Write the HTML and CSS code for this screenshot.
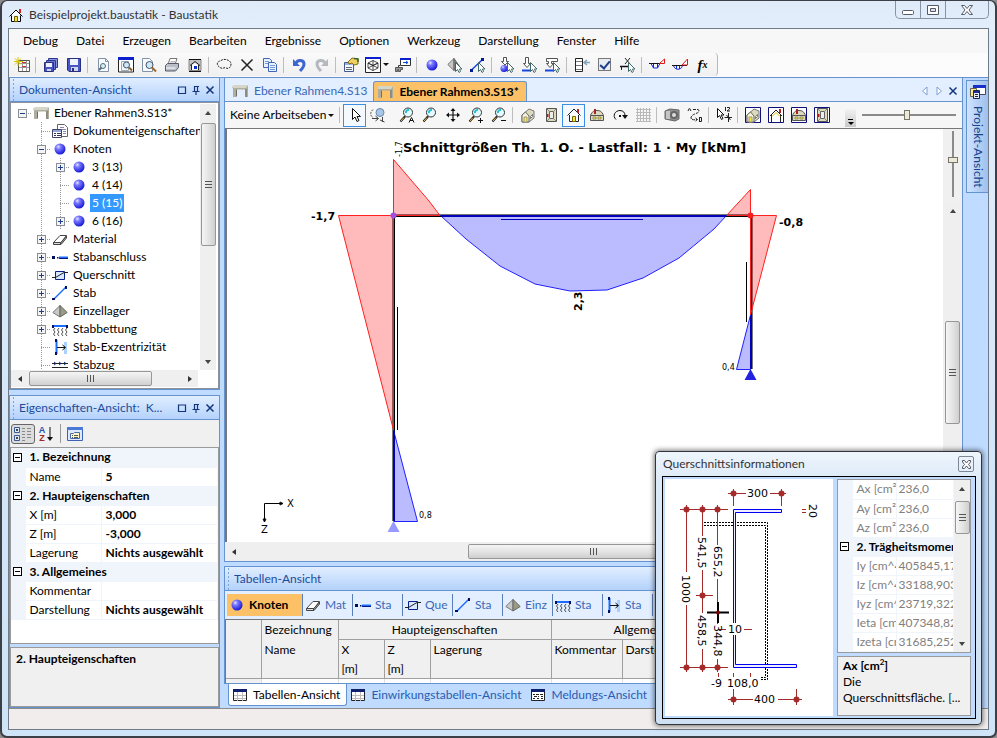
FILE: index.html
```html
<!DOCTYPE html>
<html lang="de">
  <head>
    <meta charset="UTF-8" />
    <meta name="viewport" content="width=device-width, initial-scale=1.0" />
    <title>Beispielprojekt.baustatik - Baustatik</title>
    <link rel="stylesheet" href="styles.css">
  </head>
  <body>
    <!-- Symbole -->
    <svg class="sprite" width="0" height="0" aria-hidden="true">
      <defs>
        <radialGradient id="g-ball" cx="35%" cy="30%" r="70%">
          <stop offset="0" stop-color="#e8e8ff" /><stop offset=".3" stop-color="#7b7bff" /><stop offset="1" stop-color="#1a1ad8" />
        </radialGradient>
        <linearGradient id="g-sup" x1="0" x2="1"><stop offset="0" stop-color="#9a9aff" /><stop offset="1" stop-color="#2020e0" /></linearGradient>
        <g id="cursor-s"><path d="M8.5 5.5v9l2-2 1.500 3 1.500-1-1-2.500h2.500z" fill="#fff" stroke="#3f6a6a" /></g>
        <g id="lens">
          <path d="M1.500 14.500 6 9.500" stroke="#111" stroke-width="2" /><path d="M2 14 5 10.500" stroke="#e9c34a" />
          <circle cx="9" cy="5.500" r="4.500" fill="#e6fbff" stroke="#333" /><path d="M7 6a2.500 2.500 0 0 1 3-3" fill="none" stroke="#18c0d8" stroke-width="2" />
        </g>
        <g id="hut"><path d="M1.500 8.500 8 2l6.500 6.500M3.500 8v6.500h9V8" fill="none" stroke="#222" /><path d="M4 8 8 4l4 4v6H4z" fill="#fff" /><path d="M6.500 9.500h3v5h-3z" fill="#ffe93c" stroke="#776a00" /><path d="M11 2h2v4h-2z" fill="#b22" /></g>
        <g id="hut3d"><path d="M2 8 9 2l5 2v7l-5 4H2z" fill="#ddd9bc" stroke="#777" /><path d="M2 8l3.500-3L9 9v6H2z" fill="#f5f2d6" stroke="#666" /><path d="M4 10h3v5H4z" fill="#ffe93c" stroke="#998" /><path d="M10.500 9.500l2-2v2l-2 2z" fill="#fff" stroke="#777" /></g>
        <g id="hutside"><path d="M1.500 8.500C3 4.500 5 3.500 8 3.500s5 1 6.500 5v5h-13z" fill="#ddd9bc" stroke="#555" /><path d="M1.500 8.500h13" stroke="#555" /><path d="M5 2h2v5H5z" fill="#a22" /><path d="M4 10h3v2H4zM9 10h3v2H9z" fill="#ffe93c" stroke="#665" stroke-width=".6" /></g>
        <g id="tuer"><path d="M3.500 1.500h10v13h-10z" fill="#ddd9bc" stroke="#555" /><path d="M6.500 4.500h4v7h-4z" fill="#eee" stroke="#666" /><path d="M3.500 1.500l3 3M13.500 1.500l-3 3M3.500 14.500l3-3M13.500 14.500l-3-3" stroke="#888" /><path d="M4 7h1.500v3H4z" fill="#b11" /></g>
      </defs>
      <symbol id="i-app" viewBox="0 0 16 16"><path d="M1.500 9.500 8 3l6.500 6.500M3.500 8.500v6h9v-6" fill="#fff" stroke="#000" /><path d="M11 2h2v4h-2z" fill="#e02020" /><path d="M6.500 9.500h3v5h-3z" fill="#f8e33a" stroke="#6a5a00" /></symbol>
      <symbol id="i-new" viewBox="0 0 16 16"><path d="M4.500 3.500h11v11h-11z" fill="#fff" stroke="#555" /><path d="M5 6.500h10M5 10.500h10M8.500 4v10M12.500 4v10" stroke="#999" /><path d="M8 5.500h4M8 9.500h4" stroke="#c33" /><path d="M4 0v9M0 4.500h9M1 1.500l6 6M7 1.500l-6 6" stroke="#d9c400" /></symbol>
      <symbol id="i-save" viewBox="0 0 16 16"><path d="M1.500 1.500h13v13H3l-1.500-1.500z" fill="#4a55c4" stroke="#26307e" /><path d="M4 2h8v6H4z" fill="#eef2ff" /><path d="M5 10h7v4H5z" fill="#cfd5ea" /><path d="M6 11h2v3H6z" fill="#26307e" /></symbol>
      <symbol id="i-saveall" viewBox="0 0 16 16"><path d="M5.500 1.500h9v9h-9z" fill="#8d96dc" stroke="#2c3690" /><path d="M3.500 3.500h9v9h-9z" fill="#6d78d0" stroke="#2c3690" /><path d="M1.500 5.500h9v9h-9z" fill="#4a55c4" stroke="#26307e" /><path d="M3 6h6v4H3z" fill="#eef2ff" /><path d="M4 12h4v2H4z" fill="#cfd5ea" /></symbol>
      <symbol id="i-page" viewBox="0 0 16 16"><path d="M3.500 1.500h7l3 3v10h-10z" fill="#f6f9fd" stroke="#8494a8" /><path d="M10.500 1.500v3h3" fill="none" stroke="#8494a8" /><circle cx="8" cy="9" r="2.500" fill="#d8ecf4" stroke="#55707c" /><path d="M4 13l2.500-2.500" stroke="#55707c" stroke-width="2" /></symbol>
      <symbol id="i-preview" viewBox="0 0 16 16"><path d="M.5 1h15v14H.5z" fill="#fff" stroke="#222" /><path d="M0 0h16v3H0z" fill="#0a1fd0" /><path d="M3.500 4.500h7v9h-7z" fill="#f3f6fa" stroke="#9ab" /><circle cx="8.500" cy="8" r="3" fill="#cfe8f8" stroke="#456" /><path d="M11 10.500l3 3" stroke="#8a5a20" stroke-width="2" /></symbol>
      <symbol id="i-pagemag" viewBox="0 0 16 16"><path d="M1.500 1.500h7l3 3v10h-10z" fill="#f6f9fd" stroke="#8494a8" /><circle cx="8.500" cy="8" r="3.500" fill="#cfe8f8" stroke="#456" /><path d="M11 10.500l4 4" stroke="#a5682a" stroke-width="2" /></symbol>
      <symbol id="i-print" viewBox="0 0 16 16"><path d="M6 1.500h7l-2 6H4z" fill="#fff" stroke="#777" /><path d="M6.500 4.500h5M6 6h5" stroke="#bbb" /><path d="M1.500 8.500l2-2h11v4l-3 3.500h-10z" fill="#b9bec8" stroke="#555c68" /><path d="M2 11h9.500" stroke="#fff" /></symbol>
      <symbol id="i-hutgray" viewBox="0 0 16 16"><path d="M2 2.500h12v11H2z" fill="#c4c4c4" stroke="#888" /><path d="M2 2.500h12M2 14.500h12" stroke="#111" /><path d="M3 8.500l5-4 5 4M4.500 8v5M11.500 8v5" fill="none" stroke="#222" /><path d="M5 8l3-2 3 2v5H5z" fill="#fff" /><path d="M7 9h3v3H7z" fill="#13c" /></symbol>
      <symbol id="i-lasso" viewBox="0 0 16 16"><path d="M5 3.500C8 1 15 3 15 7s-3 5-5 4-3 1-5 0S.5 8 1.500 6 3 4.500 5 3.500z" fill="none" stroke="#222" stroke-dasharray="2 1" /></symbol>
      <symbol id="i-x" viewBox="0 0 16 16"><path d="M2.500 2.500l11 11M13.500 2.500l-11 11" stroke="#222" stroke-width="1.500" /></symbol>
      <symbol id="i-copy" viewBox="0 0 16 16"><path d="M1.500 1.500h6l2 2v7h-8z" fill="#e8f1ff" stroke="#3f66b8" /><path d="M6.500 5.500h6l2 2v7h-8z" fill="#e8f1ff" stroke="#3f66b8" /><path d="M3 4.500h4M3 6.500h3M8 8.500h5M8 10.500h5M8 12.500h5" stroke="#7a9ad8" /></symbol>
      <symbol id="i-undo" viewBox="0 0 16 16"><path d="M5 6c2-4 8-3 8 1 0 3-2 5-4 7" fill="none" stroke="#3d66d0" stroke-width="3" /><path d="M2 2v7h7z" fill="#3d66d0" /></symbol>
      <symbol id="i-redo" viewBox="0 0 16 16"><path d="M11 6C9 2 3 3 3 7c0 3 2 5 4 7" fill="none" stroke="#b5b9bf" stroke-width="3" /><path d="M14 2v7H7z" fill="#b5b9bf" /></symbol>
      <symbol id="i-props" viewBox="0 0 16 16"><path d="M1.500 5.500h9v9h-9z" fill="#f2f6ff" stroke="#44598c" /><path d="M2 6h8v2H2z" fill="#9db3df" /><path d="M3 10.500h6M3 12.500h6" stroke="#667" /><path d="M5 5l4-4 6 1v5l-4 1-2-2-3 1z" fill="#f1cf63" stroke="#8a6d1a" /><path d="M11 1.500l4 .5v3" stroke="#386a2c" fill="none" stroke-width="1.500" /></symbol>
      <symbol id="i-cube" viewBox="0 0 16 16"><path d="M.5 1h15v14.500H.5z" fill="#fff" stroke="#222" /><path d="M0 0h16v2H0z" fill="#0a1fd0" /><path d="M8 3.500l5 2.500v5l-5 2.500-5-2.500V6zM8 3.500v10M3 6l10 5M13 6 3 11M3 6l5 2.500L13 6" fill="none" stroke="#222" stroke-width=".8" /></symbol>
      <symbol id="i-link" viewBox="0 0 16 16"><path d="M5.500 1.500h10v7h-10z" fill="#fff" stroke="#333" /><path d="M5 1h11v2H5z" fill="#0a1fd0" /><path d="M8 5.500h5M11 4l2 1.500L11 7" fill="none" stroke="#0a50d0" /><path d="M5 8.500H3.500v2" fill="none" stroke="#333" /><path d="M.5 10.500h7v2h-2v2h-2v-2h-1v2h-2z" fill="#999" stroke="#555" /></symbol>
      <symbol id="i-ball" viewBox="0 0 16 16"><circle cx="8" cy="8" r="5.500" fill="url(#g-ball)" /></symbol>
      <symbol id="i-lager" viewBox="0 0 16 16"><path d="M8 2.500v11.500L.8 9.500z" fill="#c8c8c8" stroke="#777" /><path d="M8 2.500v11.500l7.200-4.500z" fill="#9b9b84" stroke="#666" /></symbol>
      <symbol id="i-lagercur" viewBox="0 0 16 16"><path d="M7 1.500v12L.8 7.500z" fill="#c8c8c8" stroke="#777" /><path d="M7 1.500v12l5-5z" fill="#888" stroke="#666" /><use href="#cursor-s" /></symbol>
      <symbol id="i-linecur" viewBox="0 0 16 16"><path d="M1 13.500 12.500 2.500" stroke="#1746e0" stroke-width="1.500" /><path d="M0 12h3v3H0zM11 1h3v3h-3z" fill="#001a90" /><use href="#cursor-s" /></symbol>
      <symbol id="i-ballcur" viewBox="0 0 16 16"><circle cx="5" cy="11.500" r="3.500" fill="url(#g-ball)" /><path d="M4.500.5h3v4h2L6 8 2.500 4.500h2z" fill="#fff" stroke="#555" /><use href="#cursor-s" /></symbol>
      <symbol id="i-loadcur" viewBox="0 0 16 16"><path d="M0 13.500h9" stroke="#1746e0" stroke-width="2" /><path d="M3.500.5h3v6h2L5 10.500 1.500 6.500h2z" fill="#fff" stroke="#555" /><use href="#cursor-s" /></symbol>
      <symbol id="i-load2cur" viewBox="0 0 16 16"><path d="M0 13.500h9" stroke="#1746e0" stroke-width="2" /><path d="M1.500 1.500h11v3h-6v2h2L5 10.500 1.500 6.500h2v-2h-2z" fill="#fff" stroke="#555" /><use href="#cursor-s" /></symbol>
      <symbol id="i-bars" viewBox="0 0 16 16"><path d="M1.500 1.500h7v13h-7z" fill="#fff" stroke="#222" /><path d="M2 4.500h6M2 8.500h6M2 12.500h6" stroke="#777" /><path d="M16 5.500h-5M13 3l-3 2.500L13 8" fill="none" stroke="#7ea2b8" stroke-width="1.500" /></symbol>
      <symbol id="i-cut" viewBox="0 0 16 16"><path d="M0 9.500h9" stroke="#111" stroke-width="1.500" /><path d="M5 1l5 6M10 1 5 7M1.500 9v4" stroke="#222" /><use href="#cursor-s" /></symbol>
      <symbol id="i-mom1" viewBox="0 0 16 16"><path d="M0 6.500h11" stroke="#111" /><path d="M2 6.500 4.500 11h4L11 6.500M4.500 7v4M8.500 7v4" fill="none" stroke="#1626d8" /><path d="M10.500 6.500 15.500 2v4.500z" fill="#fff" stroke="#e01818" /></symbol>
      <symbol id="i-mom2" viewBox="0 0 16 16"><path d="M0 8.500h15" stroke="#111" /><path d="M1.500 8.500c1 5 8 5 9 0M4.500 9v3M7.500 9v3" fill="none" stroke="#1626d8" /><path d="M10 8l5.500-6v6z" fill="#fff" stroke="#e01818" /></symbol>
      <symbol id="i-cursor" viewBox="0 0 16 16"><path d="M5.500 1.500v11l2.500-2.500 2 4.500 2-1-2-4h3.500z" fill="#fff" stroke="#111" /></symbol>
      <symbol id="i-orbit" viewBox="0 0 16 16"><circle cx="10" cy="5.500" r="4" fill="#a9c8e8" stroke="#6687aa" /><path d="M3 2.500C0 5 0 9 3 10.500" fill="none" stroke="#555" stroke-dasharray="2 1" /><path d="M2 11.500h6M5.500 9l3 2.500-3 2.500M12.500 10v5M10 13l4.500 2" fill="none" stroke="#444" /></symbol>
      <symbol id="i-maga" viewBox="0 0 16 16"><use href="#lens" /><path d="M10 15.500l2.500-5 2.500 5M11 13.500h3" fill="none" stroke="#111" /></symbol>
      <symbol id="i-mag" viewBox="0 0 16 16"><use href="#lens" /></symbol>
      <symbol id="i-magp" viewBox="0 0 16 16"><use href="#lens" /><path d="M10 13.500h5M12.500 11v5" stroke="#111" /></symbol>
      <symbol id="i-magm" viewBox="0 0 16 16"><use href="#lens" /><path d="M10 13.500h5" stroke="#111" /></symbol>
      <symbol id="i-move" viewBox="0 0 16 16"><path d="M8 2v12M2 8h12" stroke="#111" stroke-width="1.200" /><path d="M8 1l2.500 3h-5zM8 15l2.500-3h-5zM1 8l3-2.500v5zM15 8l-3-2.500v5z" fill="#111" /></symbol>
      <symbol id="i-hut3d" viewBox="0 0 16 16"><use href="#hut3d" /></symbol>
      <symbol id="i-tuer" viewBox="0 0 16 16"><use href="#tuer" /></symbol>
      <symbol id="i-hut" viewBox="0 0 16 16"><use href="#hut" /></symbol>
      <symbol id="i-hutside" viewBox="0 0 16 16"><use href="#hutside" /></symbol>
      <symbol id="i-hut3d-f" viewBox="0 0 16 16"><path d="M.5.5h15v15H.5z" fill="#fff" stroke="#10107c" /><use href="#hut3d" /></symbol>
      <symbol id="i-hut-f" viewBox="0 0 16 16"><path d="M.5.5h15v15H.5z" fill="#fff" stroke="#10107c" /><path d="M2 9l6-6 6 6M3.500 8v7M12.500 8v7" fill="none" stroke="#222" /><path d="M4 9.500 8 5.500l4 4" fill="none" stroke="#d9c400" /><path d="M11 2h2v4h-2z" fill="#b22" /></symbol>
      <symbol id="i-hutside-f" viewBox="0 0 16 16"><path d="M.5.5h15v15H.5z" fill="#fff" stroke="#10107c" /><use href="#hutside" /></symbol>
      <symbol id="i-tuer-f" viewBox="0 0 16 16"><path d="M.5.5h15v15H.5z" fill="#fff" stroke="#10107c" /><use href="#tuer" /></symbol>
      <symbol id="i-rot" viewBox="0 0 16 16"><path d="M4 12.500C0 9 3 3.500 8 3.500c3 0 5 2 5 5" fill="none" stroke="#111" /><path d="M10 8h6l-3 4z" fill="#111" /><path d="M7 8h2v2H7z" fill="#111" /></symbol>
      <symbol id="i-grid" viewBox="0 0 16 16"><path d="M2.500 1v14M5.500 1v14M8.500 1v14M11.500 1v14M14.500 1v14M1 2.500h15M1 5.500h15M1 8.500h15M1 11.500h15M1 14.500h15" stroke="#b9b9b9" /></symbol>
      <symbol id="i-cam" viewBox="0 0 16 16"><path d="M1 4l5-2 9 1v9l-4 2-10-2z" fill="#8e8e8e" stroke="#666" /><circle cx="10" cy="8" r="4" fill="#666" /><circle cx="10" cy="8" r="2" fill="#ddd" /><path d="M2 4h4v8H2z" fill="#c4c4c4" /></symbol>
      <symbol id="i-path" viewBox="0 0 16 16"><path d="M1 4l1.500-3L4 4M6 2.500h5c2 1 1 3-2 4S4 9 4 11s3 2 6 1.500" fill="none" stroke="#222" stroke-dasharray="3 1" /><path d="M12.500 10v5M12.500 10.500h2v4h-2M8.500 11l2 1.500-2 1.500" fill="none" stroke="#222" /></symbol>
      <symbol id="i-cur12" viewBox="0 0 16 16"><path d="M1.500 1.500v9l2-2 2 4 1.500-1-2-3.500H8z" fill="#fff" stroke="#111" /><path d="M9.500 0v4M11 .5h2.500v1.500L11 4h3M12.500 6v9M8.500 10.500H16M10.500 8l4 5" fill="none" stroke="#222" /></symbol>
      <symbol id="i-frame" viewBox="0 0 16 16"><path d="M0 4l2-1.500h14V14h-3V6.500H4V14H1V5.500z" fill="#aeae9e" /><path d="M0 4l2-2h14l-2 3H1z" fill="#d6d6c8" /><path d="M4.500 6.500v7M14 6v8" stroke="#6d6d62" /></symbol>
      <symbol id="i-doc" viewBox="0 0 16 16"><path d="M5.500 1.500h7l3 3v9h-10z" fill="#fff" stroke="#666" /><path d="M8 4.500h4M8 6.500h6M11 8.500h3M11 10.500h3" stroke="#88a" /><path d="M.5 6.500h9v8h-9z" fill="#fff" stroke="#446" /><path d="M1 7h8v2H1z" fill="#8fa5d8" /><path d="M2 10.500h2M5 10.500h4M2 12.500h2M5 12.500h4" stroke="#335" /></symbol>
      <symbol id="i-eraser" viewBox="0 0 16 16"><path d="M1.500 11.500 8 4.500h6.500L9 11.500z" fill="#fff" stroke="#444" /><path d="M1.500 11.500v2H8l1-2z" fill="#ddd" stroke="#444" /><path d="M9 11.500l-1 2h1l5.500-6.500v-2z" fill="#aaa" stroke="#444" /></symbol>
      <symbol id="i-anschl" viewBox="0 0 16 16"><path d="M0 7h3v3H0zM5 8h1.500v1.500H5z" fill="#00105c" /><path d="M7 8.500h9" stroke="#1a6cff" stroke-width="2" /><path d="M7 9.500h9" stroke="#06187c" /></symbol>
      <symbol id="i-quer" viewBox="0 0 16 16"><path d="M3.500 4.500h9v8h-9z" fill="#d8e8ff" stroke="#0a2088" /><path d="M0 10.500h3.500L12 5.500h4" stroke="#222" fill="none" /></symbol>
      <symbol id="i-stab" viewBox="0 0 16 16"><path d="M1.500 14.500 14 2" stroke="#1a6cff" stroke-width="1.500" /><path d="M0 13h3v2H0zM13 1h2v3h-2z" fill="#001060" /></symbol>
      <symbol id="i-bett" viewBox="0 0 16 16"><path d="M0 5h16" stroke="#1a6cff" stroke-width="2" /><path d="M0 4h2v3H0zM14 4h2v3h-2z" fill="#001060" /><path d="M3 7l-1.500 2 1.500 2-1.500 2L3 15M7 7 5.500 9 7 11l-1.500 2L7 15M11 7 9.500 9l1.500 2-1.500 2 1.500 2M15 7l-1.500 2 1.500 2-1.500 2 1.500 2" fill="none" stroke="#222" stroke-width=".8" /></symbol>
      <symbol id="i-exz" viewBox="0 0 16 16"><path d="M4.500 1v14" stroke="#1a6cff" stroke-width="2" /><path d="M3 0h2v3H3zM3 13h2v3H3z" fill="#001060" /><path d="M12 3h3v12h-3z" fill="#a9d0ff" /><path d="M5 8.500h8M10.500 6l3 2.500-3 2.500" fill="none" stroke="#111" /></symbol>
      <symbol id="i-zug" viewBox="0 0 16 16"><path d="M0 6.500h16M0 10.500h16" stroke="#222" /><path d="M2 5l2 1.500L2 8M7 5l2 1.500L7 8M12 5l2 1.500L12 8" stroke="#16308c" fill="none" /></symbol>
      <symbol id="i-cat" viewBox="0 0 22 18"><path d="M2.500 2.500h5v5h-5zM2.500 10.500h5v5h-5z" fill="#dbe9ff" stroke="#3a5c96" /><path d="M4 5h2M5 4v2M4 13h2M5 12v2" stroke="#111" /><path d="M10 3.500h3M15 3.500h4M10 6.500h3M15 6.500h4M10 9.500h3M15 9.500h4M10 12.500h3M15 12.500h4M10 15.500h3" stroke="#888" /></symbol>
      <symbol id="i-down" viewBox="0 0 6 16"><path d="M3 1v12" stroke="#111" /><path d="M0 11h6l-3 4z" fill="#111" /></symbol>
      <symbol id="i-pages" viewBox="0 0 16 16"><path d="M.5 1.500h15v13H.5z" fill="#dbe8ff" stroke="#3c62b0" /><path d="M0 1h16v3H0z" fill="#4a78d8" /><path d="M3.500 7.500h3l1-1h5v6h-9z" fill="#fff6c8" stroke="#4a6aa8" /><path d="M5 9.500h1M7 9.500h4M5 11.500h1M7 11.500h4" stroke="#555" /></symbol>
      <symbol id="i-table" viewBox="0 0 16 16"><path d="M1.500 2.500h13v11h-13z" fill="#fff" stroke="#222" /><path d="M1 2h14v3H1z" fill="#10206c" /><path d="M5.500 5v9M10.500 5v9M2 8.500h12M2 11.500h12" stroke="#bbb" /></symbol>
      <symbol id="i-msg" viewBox="0 0 16 16"><path d="M1.500 2.500h13v11h-13z" fill="#fff" stroke="#222" /><path d="M1 2h14v3H1z" fill="#10206c" /><path d="M3 7.500h2M6 7.500h3M10 7.500h3M4 9.500h3M8 9.500h1M11 9.500h2M3 11.500h2M7 11.500h2M11 11.500h2" stroke="#222" /></symbol>
      <symbol id="i-proj" viewBox="0 0 16 16"><path d="M3.500 1.500h12v9h-12z" fill="#fff" stroke="#446" /><path d="M3 1h13v3H3z" fill="#1a2ec8" /><path d="M.5 4.500h6v8h-6z" fill="#ffe98a" stroke="#664" /><path d="M3.500 6.500h6v8h-6z" fill="#e9eeff" stroke="#224" /><path d="M4 7h5v2H4z" fill="#1a2e98" /><path d="M5 10.500h3M5 12.500h3" stroke="#224" /></symbol>
      <symbol id="i-max" viewBox="0 0 10 10"><path d="M1.500 2h7v6.500h-7z" fill="none" stroke="#12357c" stroke-width="1.200" /></symbol>
      <symbol id="i-pin" viewBox="0 0 10 10"><path d="M3 1.500h5M3.500 1v5M6.500 1v5M1.500 6.500h7M5 6v4" fill="none" stroke="#12357c" stroke-width="1.200" /></symbol>
      <symbol id="i-close" viewBox="0 0 10 10"><path d="M1.500 1.500l7 7M8.500 1.500l-7 7" stroke="#12357c" stroke-width="1.500" /></symbol>
      <symbol id="i-prev" viewBox="0 0 10 10"><path d="M7 1v8L2.500 5z" fill="#fff" stroke="#7c9fd4" /></symbol>
      <symbol id="i-next" viewBox="0 0 10 10"><path d="M3 1v8l4.500-4z" fill="#fff" stroke="#7c9fd4" /></symbol>
    </svg>

    <div class="window">
      <!-- Titelleiste -->
      <header class="titlebar">
        <svg class="icon"><use href="#i-app" /></svg>
        <h1>Beispielprojekt.baustatik - Baustatik</h1>
        <div class="caption">
          <button aria-label="Minimieren"><svg width="14" height="12"><rect x="1.500" y="6.500" width="11" height="4" rx="1" fill="#fff" stroke="#555b66" /></svg></button>
          <button aria-label="Maximieren"><svg width="14" height="12"><path d="M1.500 1.500h11v9h-11z" fill="#fff" stroke="#555b66" /><path d="M4.500 4.500h5v3h-5z" fill="#dde" stroke="#555b66" /></svg></button>
          <button class="caption-close" aria-label="Schließen"><svg width="14" height="12"><path d="M1.500 1.500h3l2.500 3 2.500-3h3L9 6l3.500 4.500h-3L7 7.500l-2.500 3h-3L5 6z" fill="#fff" stroke="#555b66" /></svg></button>
        </div>
      </header>

      <div class="client">
        <!-- Menü -->
        <nav class="menubar">
          <button>Debug</button><button>Datei</button><button>Erzeugen</button><button>Bearbeiten</button><button>Ergebnisse</button><button>Optionen</button><button>Werkzeug</button><button>Darstellung</button><button>Fenster</button><button>Hilfe</button>
        </nav>
        <!-- Hauptwerkzeuge -->
        <div class="toolrow">
          <div class="tools tools-main">
            <button aria-label="Neu"><svg class="icon"><use href="#i-new" /></svg></button><i></i>
            <button aria-label="Alle speichern"><svg class="icon"><use href="#i-saveall" /></svg></button>
            <button aria-label="Speichern"><svg class="icon"><use href="#i-save" /></svg></button><i></i>
            <button aria-label="Seite"><svg class="icon"><use href="#i-page" /></svg></button>
            <button aria-label="Vorschau"><svg class="icon"><use href="#i-preview" /></svg></button>
            <button aria-label="Seitenansicht"><svg class="icon"><use href="#i-pagemag" /></svg></button>
            <button aria-label="Drucken"><svg class="icon"><use href="#i-print" /></svg></button>
            <button aria-label="Grafik"><svg class="icon"><use href="#i-hutgray" /></svg></button><i></i>
            <button aria-label="Lasso"><svg class="icon"><use href="#i-lasso" /></svg></button>
            <button aria-label="Löschen"><svg class="icon"><use href="#i-x" /></svg></button>
            <button aria-label="Kopieren"><svg class="icon"><use href="#i-copy" /></svg></button><i></i>
            <button aria-label="Rückgängig"><svg class="icon"><use href="#i-undo" /></svg></button>
            <button aria-label="Wiederholen"><svg class="icon"><use href="#i-redo" /></svg></button><i></i>
            <button aria-label="Eigenschaften"><svg class="icon"><use href="#i-props" /></svg></button>
            <button class="drop" aria-label="3D-Ansicht"><svg class="icon"><use href="#i-cube" /></svg></button>
            <button aria-label="Verknüpfen"><svg class="icon"><use href="#i-link" /></svg></button><i></i>
            <button aria-label="Knoten"><svg class="icon"><use href="#i-ball" /></svg></button>
            <button aria-label="Lager"><svg class="icon"><use href="#i-lagercur" /></svg></button>
            <button aria-label="Stab"><svg class="icon"><use href="#i-linecur" /></svg></button><i></i>
            <button aria-label="Knotenlast"><svg class="icon"><use href="#i-ballcur" /></svg></button>
            <button aria-label="Stablast"><svg class="icon"><use href="#i-loadcur" /></svg></button>
            <button aria-label="Streckenlast"><svg class="icon"><use href="#i-load2cur" /></svg></button><i></i>
            <button aria-label="Lastfälle"><svg class="icon"><use href="#i-bars" /></svg></button>
            <label class="tick"><input type="checkbox" checked aria-label="Berechnen"></label>
            <button aria-label="Schnitt"><svg class="icon"><use href="#i-cut" /></svg></button><i></i>
            <button aria-label="Moment"><svg class="icon"><use href="#i-mom1" /></svg></button>
            <button aria-label="Momentenlinie"><svg class="icon"><use href="#i-mom2" /></svg></button>
            <button class="fx" aria-label="Funktion">f<sub>x</sub></button>
          </div>
        </div>

        <div class="workspace">
          <!-- Linke Spalte -->
          <aside class="left">
            <section class="panel">
              <header class="panel-head">
                <h2>Dokumenten-Ansicht</h2>
                <button aria-label="Maximieren"><svg class="glyph"><use href="#i-max" /></svg></button>
                <button aria-label="Anheften"><svg class="glyph"><use href="#i-pin" /></svg></button>
                <button aria-label="Schließen"><svg class="glyph"><use href="#i-close" /></svg></button>
              </header>
              <div class="tree-box">
                <div class="tree-scroll">
                  <ul class="tree">
                    <li><span class="node root"><button class="toggle minus" aria-label="Zuklappen"></button></span><svg class="icon"><use href="#i-frame" /></svg><span>Ebener Rahmen3.S13*</span></li>
                    <li class="l1"><span class="node"></span><svg class="icon"><use href="#i-doc" /></svg><span>Dokumenteigenschaften</span></li>
                    <li class="l1"><span class="node"><button class="toggle minus" aria-label="Zuklappen"></button></span><svg class="icon"><use href="#i-ball" /></svg><span>Knoten</span></li>
                    <li class="l1"><span class="rail"></span><span class="node"><button class="toggle" aria-label="Aufklappen"></button></span><svg class="icon"><use href="#i-ball" /></svg><span>3 (13)</span></li>
                    <li class="l1"><span class="rail"></span><span class="node"></span><svg class="icon"><use href="#i-ball" /></svg><span>4 (14)</span></li>
                    <li class="l1"><span class="rail"></span><span class="node"></span><svg class="icon"><use href="#i-ball" /></svg><span class="selected">5 (15)</span></li>
                    <li class="l1"><span class="rail"></span><span class="node last"><button class="toggle" aria-label="Aufklappen"></button></span><svg class="icon"><use href="#i-ball" /></svg><span>6 (16)</span></li>
                    <li class="l1"><span class="node"><button class="toggle" aria-label="Aufklappen"></button></span><svg class="icon"><use href="#i-eraser" /></svg><span>Material</span></li>
                    <li class="l1"><span class="node"><button class="toggle" aria-label="Aufklappen"></button></span><svg class="icon"><use href="#i-anschl" /></svg><span>Stabanschluss</span></li>
                    <li class="l1"><span class="node"><button class="toggle" aria-label="Aufklappen"></button></span><svg class="icon"><use href="#i-quer" /></svg><span>Querschnitt</span></li>
                    <li class="l1"><span class="node"><button class="toggle" aria-label="Aufklappen"></button></span><svg class="icon"><use href="#i-stab" /></svg><span>Stab</span></li>
                    <li class="l1"><span class="node"><button class="toggle" aria-label="Aufklappen"></button></span><svg class="icon"><use href="#i-lager" /></svg><span>Einzellager</span></li>
                    <li class="l1"><span class="node"><button class="toggle" aria-label="Aufklappen"></button></span><svg class="icon"><use href="#i-bett" /></svg><span>Stabbettung</span></li>
                    <li class="l1"><span class="node"></span><svg class="icon"><use href="#i-exz" /></svg><span>Stab-Exzentrizität</span></li>
                    <li class="l1"><span class="node"></span><svg class="icon"><use href="#i-zug" /></svg><span>Stabzug</span></li>
                  </ul>
                  <div class="vbar tree-vbar"><b class="up"></b><em></em><b class="down"></b></div>
                </div>
                <div class="hbar tree-hbar"><b class="lt"></b><em></em><b class="rt"></b></div>
              </div>
            </section>

            <section class="panel props-panel">
              <header class="panel-head">
                <h2>Eigenschaften-Ansicht:&nbsp; K...</h2>
                <button aria-label="Maximieren"><svg class="glyph"><use href="#i-max" /></svg></button>
                <button aria-label="Anheften"><svg class="glyph"><use href="#i-pin" /></svg></button>
                <button aria-label="Schließen"><svg class="glyph"><use href="#i-close" /></svg></button>
              </header>
              <div class="props-tools">
                <button class="pressed" aria-label="Kategorien"><svg width="22" height="18"><use href="#i-cat" /></svg></button>
                <button class="sort" aria-label="Alphabetisch"><span>A<br><span class="sort-z">Z</span></span><svg width="6" height="16"><use href="#i-down" /></svg></button><i></i>
                <button aria-label="Eigenschaftenseiten"><svg class="icon"><use href="#i-pages" /></svg></button>
              </div>
              <div class="grid-box">
                <table class="propgrid">
                  <colgroup><col class="c-fold"><col class="c-prop"><col></colgroup>
                  <tr class="cat"><td><button class="fold" aria-label="Zuklappen"></button></td><th colspan="2">1. Bezeichnung</th></tr>
                  <tr><td></td><th>Name</th><td>5</td></tr>
                  <tr class="cat"><td><button class="fold" aria-label="Zuklappen"></button></td><th colspan="2">2. Haupteigenschaften</th></tr>
                  <tr><td></td><th>X [m]</th><td>3,000</td></tr>
                  <tr><td></td><th>Z [m]</th><td>-3,000</td></tr>
                  <tr><td></td><th>Lagerung</th><td>Nichts ausgewählt</td></tr>
                  <tr class="cat"><td><button class="fold" aria-label="Zuklappen"></button></td><th colspan="2">3. Allgemeines</th></tr>
                  <tr><td></td><th>Kommentar</th><td></td></tr>
                  <tr><td></td><th>Darstellung</th><td>Nichts ausgewählt</td></tr>
                </table>
              </div>
              <div class="hint"><strong>2. Haupteigenschaften</strong></div>
            </section>
          </aside>

          <!-- Mitte -->
          <main class="center">
            <section class="docs">
              <div class="doctabs">
                <button class="doctab"><svg class="icon"><use href="#i-frame" /></svg>Ebener Rahmen4.S13</button>
                <button class="doctab active"><svg class="icon"><use href="#i-frame" /></svg>Ebener Rahmen3.S13*</button>
                <span class="docnav">
                  <button aria-label="Zurück"><svg class="glyph"><use href="#i-prev" /></svg></button>
                  <button aria-label="Weiter"><svg class="glyph"><use href="#i-next" /></svg></button>
                  <button aria-label="Schließen"><svg class="glyph"><use href="#i-close" /></svg></button>
                </span>
              </div>
              <div class="viewbar">
                <div class="tools">
                  <button class="plane">Keine Arbeitseben</button><i></i>
                  <button class="on" aria-label="Auswahl"><svg class="icon"><use href="#i-cursor" /></svg></button>
                  <button aria-label="Drehen"><svg class="icon"><use href="#i-orbit" /></svg></button><i class="blank"></i>
                  <button aria-label="Alles zoomen"><svg class="icon"><use href="#i-maga" /></svg></button>
                  <button aria-label="Zoom"><svg class="icon"><use href="#i-mag" /></svg></button>
                  <button aria-label="Verschieben"><svg class="icon"><use href="#i-move" /></svg></button>
                  <button aria-label="Vergrößern"><svg class="icon"><use href="#i-magp" /></svg></button>
                  <button aria-label="Verkleinern"><svg class="icon"><use href="#i-magm" /></svg></button><i></i>
                  <button aria-label="Isometrie"><svg class="icon"><use href="#i-hut3d" /></svg></button>
                  <button aria-label="Draufsicht"><svg class="icon"><use href="#i-tuer" /></svg></button>
                  <button class="on" aria-label="Vorderansicht"><svg class="icon"><use href="#i-hut" /></svg></button>
                  <button aria-label="Seitenansicht"><svg class="icon"><use href="#i-hutside" /></svg></button>
                  <button aria-label="Rotieren"><svg class="icon"><use href="#i-rot" /></svg></button>
                  <button aria-label="Raster"><svg class="icon"><use href="#i-grid" /></svg></button><i></i>
                  <button aria-label="Foto"><svg class="icon"><use href="#i-cam" /></svg></button>
                  <button aria-label="Pfad"><svg class="icon"><use href="#i-path" /></svg></button><i></i>
                  <button aria-label="Nummern"><svg class="icon"><use href="#i-cur12" /></svg></button><i></i>
                  <button aria-label="Fenster Isometrie"><svg class="icon"><use href="#i-hut3d-f" /></svg></button>
                  <button aria-label="Fenster vorn"><svg class="icon"><use href="#i-hut-f" /></svg></button>
                  <button aria-label="Fenster Seite"><svg class="icon"><use href="#i-hutside-f" /></svg></button>
                  <button aria-label="Fenster oben"><svg class="icon"><use href="#i-tuer-f" /></svg></button>
                </div>
                <button class="more" aria-label="Weitere"></button>
                <input class="zoom" type="range" min="0" max="100" value="48" aria-label="Zoom">
              </div>
              <div class="view">
                <div class="canvas">
                  <svg class="plot" width="100%" height="100%">
                    <text x="175" y="27" transform="rotate(-90 175 27)" class="t-small">-1,7</text>
                    <text x="176" y="22" class="t-title">Schnittgrößen Th. 1. O. - Lastfall: 1 · My [kNm]</text>
                    <!-- Stäbe -->
                    <path d="M167 84.500H524M165.500 86V391M525.500 86V239" stroke="#777" fill="none" />
                    <path d="M167 86H524M167 86V391M524 86V239" stroke="#000" stroke-width="2" fill="none" />
                    <path d="M170.500 177V300M519.500 132V192" stroke="#000" />
                    <!-- Momentenflächen -->
                    <g class="neg">
                      <path d="M166.500 85.500V29.500L202 71l11 14.500z" />
                      <path d="M111.500 85.500h55V300z" />
                      <path d="M499.500 85.500l24-26v26z" />
                      <path d="M523.500 85.500h26L523.500 185z" />
                    </g>
                    <g class="pos">
                      <path d="M213.500 85.500 239 109l34 27 35 18 35 7 37-1 36-12 36-20 35-29 12.500-13.500z" />
                      <path d="M166.500 300l24 91.500h-24z" />
                      <path d="M523.500 185v54.500h-14z" />
                    </g>
                    <path d="M214 86H499M167 301V391M524 186V239" stroke="#0000b8" stroke-width="2" />
                    <path d="M274 89.500H416" stroke="#0000b8" />
                    <path d="M166.500 391l-6 11h12zM523.500 239l-6 11h12z" fill="url(#g-sup)" />
                    <circle cx="166.500" cy="85.500" r="3" fill="#a050e0" /><circle cx="523.500" cy="85.500" r="3" fill="#f02020" />
                    <!-- Werte -->
                    <text x="84" y="90" class="t-val">-1,7</text>
                    <text x="552" y="96" class="t-val">-0,8</text>
                    <text x="355" y="181" transform="rotate(-90 355 181)" class="t-val">2,3</text>
                    <text x="495" y="240" class="t-small">0,4</text>
                    <text x="192" y="388" class="t-small">0,8</text>
                    <!-- Achsen -->
                    <path d="M37.500 391V373.500H55M53 372v3l3-1.500zM36 389h3l-1.500 3z" fill="none" stroke="#000" />
                    <text x="60" y="377" class="t-axis">X</text>
                    <text x="34" y="403" class="t-axis">Z</text>
                  </svg>
                </div>
                <div class="side">
                  <input class="zoom upright" type="range" min="0" max="100" value="44" aria-label="Höhe">
                  <div class="vbar view-vbar"><b class="up"></b><em></em><b class="down"></b></div>
                </div>
              </div>
              <div class="hbar view-hbar"><b class="lt"></b><em></em><b class="rt"></b></div>
            </section>

            <section class="tables">
              <header class="panel-head"><h2>Tabellen-Ansicht</h2></header>
              <div class="kinds">
                <button class="active"><svg class="icon"><use href="#i-ball" /></svg>Knoten</button>
                <button><svg class="icon"><use href="#i-eraser" /></svg>Mat</button>
                <button><svg class="icon"><use href="#i-anschl" /></svg>Sta</button>
                <button><svg class="icon"><use href="#i-quer" /></svg>Que</button>
                <button><svg class="icon"><use href="#i-stab" /></svg>Sta</button>
                <button><svg class="icon"><use href="#i-lager" /></svg>Einz</button>
                <button><svg class="icon"><use href="#i-bett" /></svg>Sta</button>
                <button><svg class="icon"><use href="#i-exz" /></svg>Sta</button>
                <button><svg class="icon"><use href="#i-zug" /></svg>Sta</button>
              </div>
              <div class="sheet">
                <table>
                  <colgroup><col class="c-no"><col class="c-name"><col class="c-x"><col class="c-x"><col class="c-lag"><col class="c-kom"><col></colgroup>
                  <thead>
                    <tr><th rowspan="2"></th><th class="open">Bezeichnung</th><th colspan="3" class="group">Haupteigenschaften</th><th colspan="2" class="group wide">Allgemeines</th></tr>
                    <tr><th>Name</th><th>X<br>[m]</th><th>Z<br>[m]</th><th>Lagerung</th><th>Kommentar</th><th>Darstellung</th></tr>
                  </thead>
                  <tbody><tr><td></td><td></td><td></td><td></td><td></td><td></td><td></td></tr></tbody>
                </table>
              </div>
            </section>
            <div class="bottomtabs">
              <button class="active"><svg class="icon"><use href="#i-table" /></svg>Tabellen-Ansicht</button>
              <button><svg class="icon"><use href="#i-table" /></svg>Einwirkungstabellen-Ansicht</button>
              <button><svg class="icon"><use href="#i-msg" /></svg>Meldungs-Ansicht</button>
            </div>
          </main>

          <!-- Rechte Leiste -->
          <aside class="right"><button><svg class="icon"><use href="#i-proj" /></svg>Projekt-Ansicht</button></aside>
        </div>
        <footer class="status"></footer>
      </div>

      <!-- Querschnittsfenster -->
      <section class="dialog">
        <header>
          <h2>Querschnittsinformationen</h2>
          <button aria-label="Schließen"><svg width="9" height="9"><path d="M.5.500h2l2 2.500 2-2.500h2v1.500L6.500 4.500l2 2.500v1.500h-2l-2-2.500-2 2.500h-2V7l2-2.500-2-2.500z" fill="#fff" stroke="#555b66" /></svg></button>
        </header>
        <div class="dialog-body">
          <svg class="profile" width="168" height="235">
            <!-- Schwerachsenlage -->
            <path d="M39 43.500h63.500V200.500H95M39 46.500h61.500V198.500H95" fill="none" stroke="#000" stroke-dasharray="2 1" />
            <path d="M68.500 30.500H116.500V33.500H70.500V185.500H131.500V188.500H68.500Z" fill="#eef" stroke="#0000f0" />
            <!-- Maßketten -->
            <g class="dim">
              <path d="M63 14.500h18M105 14.500h16M68.500 10v17M116.500 10v17" />
              <path d="M15 30.500h48M15 188.500h48M31 116.500h17" />
              <path d="M21.500 26v67M21.500 126v67M37.500 26v31M37.500 91v43M37.500 170v23M52.500 26v40M52.500 100v45M52.500 180v13" />
              <path d="M53 150.500h8M79 150.500h8M137 30.500h4M137 33.500h4M53.500 194v4M68.500 194v4M85.500 194v4" />
              <path d="M63 220.500h25M113 220.500h24M68.500 210v16M131.500 210v16" />
            </g>
            <g fill="#a52a2a"><circle cx="68.500" cy="14.500" r="3" /><circle cx="116.500" cy="14.500" r="3" /><circle cx="21.500" cy="30.500" r="3" /><circle cx="37.500" cy="30.500" r="3" /><circle cx="52.500" cy="30.500" r="3" /><circle cx="37.500" cy="116.500" r="3" /><circle cx="21.500" cy="188.500" r="3" /><circle cx="37.500" cy="188.500" r="3" /><circle cx="52.500" cy="188.500" r="3" /><circle cx="68.500" cy="220.500" r="3" /><circle cx="131.500" cy="220.500" r="3" /></g>
            <path d="M62 144h16v12H62zM45 199h50v10H45z" fill="#fff" />
            <g class="t-dim">
              <text x="82" y="18">300</text><text x="63" y="154">10</text><text x="46" y="208">-9</text><text x="62" y="208">108,0</text><text x="89" y="224">400</text>
              <text x="17" y="96" transform="rotate(90 17 96)">1000</text>
              <text x="33" y="58" transform="rotate(90 33 58)">541,5</text>
              <text x="49" y="67" transform="rotate(90 49 67)">655,2</text>
              <text x="33" y="136" transform="rotate(90 33 136)">458,5</text>
              <text x="49" y="146" transform="rotate(90 49 146)">344,8</text>
              <text x="144" y="25" transform="rotate(90 144 25)">20</text>
            </g>
            <path d="M42 133.500h22M53 123v21" stroke="#000" stroke-width="2" /><circle cx="53" cy="133.500" r="2" fill="#700" />
          </svg>
          <div class="values">
            <div class="values-list">
              <table class="propgrid">
                <colgroup><col class="c-fold"><col class="c-size"><col></colgroup>
                <tr><td></td><th>Ax [cm²]</th><td>236,0</td></tr>
                <tr><td></td><th>Ay [cm²]</th><td>236,0</td></tr>
                <tr><td></td><th>Az [cm²]</th><td>236,0</td></tr>
                <tr class="cat"><td><button class="fold" aria-label="Zuklappen"></button></td><th colspan="2">2. Trägheitsmomente</th></tr>
                <tr><td></td><th>Iy [cm^4]</th><td>405845,175</td></tr>
                <tr><td></td><th>Iz [cm^4]</th><td>33188,9039</td></tr>
                <tr><td></td><th>Iyz [cm^4]</th><td>23719,3220</td></tr>
                <tr><td></td><th>Ieta [cm^4]</th><td>407348,826</td></tr>
                <tr><td></td><th>Izeta [cm^4]</th><td>31685,2521</td></tr>
              </table>
              <div class="vbar val-vbar"><b class="up"></b><em></em><b class="down"></b></div>
            </div>
            <div class="values-hint"><strong>Ax [cm<sup>2</sup>]</strong><p>Die Querschnittsfläche. [...</p></div>
          </div>
        </div>
      </section>
    </div>
  </body>
</html>
```
FILE: styles.css
```css
/* Grundeinstellungen */
* {
  box-sizing: border-box;
}
html,
body {
  height: 100%;
}
body,
h1,
h2,
p,
ul {
  margin: 0;
  padding: 0;
}
body {
  background: #8c8c8c;
  color: #000;
  font: 12px/18px Lato, "Open Sans", sans-serif;
  overflow: hidden;
}
button {
  margin: 0;
  padding: 0;
  border: 0;
  background: none;
  color: inherit;
  font: inherit;
}
h1,
h2 {
  font-size: 12px;
  font-weight: normal;
}
ul {
  list-style: none;
}
table {
  border-collapse: collapse;
  table-layout: fixed;
  width: 100%;
}
.sprite {
  position: absolute;
}
.icon {
  display: block;
  flex: none;
  width: 16px;
  height: 16px;
}
.glyph {
  display: block;
  width: 10px;
  height: 10px;
}

/* Fensterrahmen */
.window {
  position: relative;
  display: flex;
  flex-direction: column;
  height: 100vh;
  padding: 0 6px 6px;
  border: 2px solid #3c3f45;
  border-top-width: 1px;
  border-radius: 7px;
  background: linear-gradient(#dfebf9, #e3eefc 30px, #d4e6f8 400px, #cfe4f7);
}
.titlebar {
  display: flex;
  align-items: center;
  height: 27px;
  color: #333;
}
.titlebar h1 {
  flex: 1;
  margin-left: 5px;
}
.caption {
  display: flex;
  align-self: flex-start;
  border: 1px solid #8793a4;
  border-top: 0;
  border-radius: 0 0 5px 5px;
}
.caption button {
  display: flex;
  align-items: center;
  justify-content: center;
  width: 25px;
  height: 17px;
  border-right: 1px solid #8793a4;
}
.caption .caption-close {
  width: 42px;
  border-right: 0;
}
.client {
  display: flex;
  flex: 1;
  flex-direction: column;
  min-height: 0;
  border: 1px solid #6f7a88;
  background: #f1eded;
}

/* Menü und Werkzeuge */
.menubar {
  display: flex;
  gap: 18px;
  align-items: center;
  height: 24px;
  padding-left: 14px;
  background: #f7f7f7;
}
.toolrow {
  height: 25px;
  background: linear-gradient(90deg, #f7f7f7, #fcfcfc);
  border-bottom: 1px solid #6593cf;
}
.tools {
  display: flex;
  align-items: center;
  height: 23px;
}
.tools-main {
  width: 709px;
  padding-left: 1px;
  border-right: 1px solid #b8b8b8;
  border-radius: 0 4px 4px 0;
  background: linear-gradient(#fafafa, #f0f0f0);
}
.tools button,
.tick {
  display: flex;
  flex: none;
  align-items: center;
  justify-content: center;
  width: 23px;
  height: 23px;
}
.tools i {
  flex: none;
  width: 6px;
  height: 16px;
  background: linear-gradient(#bdbdbd, #bdbdbd) 2px 0 / 1px 100% no-repeat;
}
.tools .blank {
  background: none;
}
.tools .drop {
  width: 29px;
}
.drop::after,
.plane::after {
  content: "";
  margin-left: 2px;
  border: 3px solid transparent;
  border-top-color: #111;
  border-bottom: 0;
}
.tools .plane {
  justify-content: flex-start;
  width: 110px;
  padding-left: 3px;
}
.tools .on {
  border: 1px solid #3a8ee6;
  background: #f4f9ff;
}
.tick input {
  appearance: none;
  width: 13px;
  height: 13px;
  margin: 0;
  border: 1px solid #777;
  background: #e8edf4;
}
.tick input:checked::before {
  content: "";
  display: block;
  width: 4px;
  height: 8px;
  margin: 0 0 0 3px;
  border: solid #1d3f8c;
  border-width: 0 2px 2px 0;
  transform: rotate(40deg);
}
.tools .fx {
  font: italic bold 15px/16px "Liberation Serif", serif;
}
.fx sub {
  font-size: 10px;
  line-height: 0;
}

/* Arbeitsbereich */
.workspace {
  display: flex;
  flex: 1;
  min-height: 0;
  background: #bfdbff;
}
.left {
  display: flex;
  flex: none;
  flex-direction: column;
  gap: 5px;
  width: 211px;
}
.center {
  display: flex;
  flex: 1;
  flex-direction: column;
  min-width: 0;
  margin-left: 4px;
}
.right {
  flex: none;
  width: 25px;
  padding: 2px 0 0 3px;
}
.right button {
  display: flex;
  gap: 6px;
  align-items: center;
  width: 22px;
  height: 113px;
  padding-top: 3px;
  border: 1px solid #6593cf;
  border-right: 0;
  background: linear-gradient(90deg, #cfe3ff, #9fc0ec);
  color: #15428b;
  writing-mode: vertical-rl;
}
.panel {
  display: flex;
  flex: 1;
  flex-direction: column;
  min-height: 0;
  border: 1px solid #6593cf;
  border-top: 0;
}
.props-panel {
  border-top: 1px solid #6593cf;
}
.panel-head {
  display: flex;
  flex: none;
  gap: 4px;
  align-items: center;
  height: 24px;
  padding: 0 4px 0 9px;
  border-bottom: 1px solid #6593cf;
  background: radial-gradient(#7ba4dc 1px, transparent 1px) 2px 4px / 3px 4px repeat-y, linear-gradient(#e1eeff, #b4d2fc);
  color: #1d4c9b;
}
.panel-head h2 {
  flex: 1;
  overflow: hidden;
  white-space: nowrap;
}
.panel-head button {
  width: 10px;
}

/* Baumansicht */
.tree-box {
  display: flex;
  flex: 1;
  flex-direction: column;
  min-height: 0;
  padding: 1px 2px 1px 0;
  border: 1px solid #8c929c;
  background: #fff;
}
.tree-scroll {
  display: flex;
  flex: 1;
  min-height: 0;
}
.tree {
  flex: 1;
  min-width: 0;
  overflow: hidden;
}
.tree li {
  display: flex;
  align-items: center;
  height: 18px;
  padding-left: 2px;
  white-space: nowrap;
}
.tree .l1 {
  padding-left: 21px;
}
.tree .icon {
  margin: 0 3px 0 1px;
}
.tree li > span:last-child {
  height: 18px;
  padding: 0 2px;
}
.tree .selected {
  background: #3399ff;
  color: #fff;
}
.node,
.rail {
  display: flex;
  flex: none;
  align-items: center;
  justify-content: center;
  width: 19px;
  height: 18px;
  background:
    repeating-linear-gradient(#999 0 1px, transparent 1px 2px) 9px 0 / 1px 100% no-repeat,
    repeating-linear-gradient(90deg, #999 0 1px, transparent 1px 2px) 9px 9px / 10px 1px no-repeat;
}
.rail {
  background: repeating-linear-gradient(#999 0 1px, transparent 1px 2px) 9px 0 / 1px 100% no-repeat;
}
.root {
  background: repeating-linear-gradient(90deg, #999 0 1px, transparent 1px 2px) 9px 9px / 10px 1px no-repeat;
}
.toggle,
.fold {
  width: 9px;
  height: 9px;
  border: 1px solid #8a8f96;
  background:
    linear-gradient(#1d3f8c, #1d3f8c) center / 5px 1px no-repeat,
    linear-gradient(#1d3f8c, #1d3f8c) center / 1px 5px no-repeat,
    #f4f4f4;
}
.minus {
  background: linear-gradient(#1d3f8c, #1d3f8c) center / 5px 1px no-repeat, #f4f4f4;
}
.fold {
  display: block;
  margin-left: 2px;
  border-color: #000;
  background: linear-gradient(#000, #000) center / 5px 1px no-repeat, #fff;
}

/* Bildlaufleisten */
.vbar,
.hbar {
  display: flex;
  flex: none;
  align-items: center;
  background: #efefef;
}
.vbar {
  flex-direction: column;
  width: 16px;
}
.hbar {
  height: 17px;
}
.vbar b,
.hbar b {
  display: flex;
  flex: none;
  align-items: center;
  justify-content: center;
  width: 17px;
  height: 17px;
}
.vbar b::after,
.hbar b::after {
  content: "";
  border: 3px solid transparent;
}
.vbar .up::after {
  border-bottom: 4px solid #444;
  border-top: 0;
}
.vbar .down::after {
  border-top: 4px solid #444;
  border-bottom: 0;
}
.hbar .lt::after {
  border-right: 4px solid #333;
  border-left: 0;
}
.hbar .rt::after {
  border-left: 4px solid #333;
  border-right: 0;
}
.vbar em {
  width: 15px;
  border: 1px solid #979797;
  border-radius: 2px;
  background:
    repeating-linear-gradient(#555 0 1px, transparent 1px 3px) center / 7px 8px no-repeat,
    linear-gradient(90deg, #f5f5f5, #e4e4e4 50%, #cfcfd1);
}
.hbar em {
  height: 15px;
  border: 1px solid #979797;
  border-radius: 2px;
  background:
    repeating-linear-gradient(90deg, #555 0 1px, transparent 1px 3px) center / 8px 7px no-repeat,
    linear-gradient(#f5f5f5, #e4e4e4 50%, #cfcfd1);
}
.vbar .down {
  margin-top: auto;
}
.hbar .rt {
  margin-left: auto;
}
.tree-vbar em {
  height: 123px;
  margin-top: 2px;
}
.tree-hbar {
  margin-right: 18px;
}
.tree-hbar em {
  width: 123px;
  margin-left: 1px;
}

/* Eigenschaften */
.props-tools {
  display: flex;
  flex: none;
  align-items: center;
  height: 27px;
  padding-left: 1px;
  background: #f0f0f0;
}
.props-tools button {
  display: flex;
  align-items: center;
  justify-content: center;
  width: 22px;
  height: 20px;
}
.props-tools .pressed {
  width: 24px;
  border: 1px solid #666;
  border-radius: 3px;
  background: #dcdcdc;
}
.props-tools .sort {
  gap: 2px;
  color: #2456b4;
  font: bold 9px/8px "Liberation Sans", sans-serif;
}
.sort-z {
  color: #a02828;
}
.props-tools i {
  width: 1px;
  height: 19px;
  margin: 0 3px;
  background: #999;
}
.grid-box {
  flex: 1;
  min-height: 0;
  border: 1px solid #9a9a9a;
  background: #fff;
}
.propgrid td,
.propgrid th {
  height: 19px;
  padding: 0 0 0 4px;
  border-bottom: 1px solid #f0f5fb;
  border-right: 1px solid #f0f5fb;
  font-weight: normal;
  line-height: 18px;
  text-align: left;
  white-space: nowrap;
  overflow: hidden;
}
.propgrid td {
  font-weight: bold;
}
.propgrid tr > td:first-child {
  padding: 0;
  background: #f0f5fb;
}
.propgrid .cat th {
  background: #f0f5fb;
  font-weight: bold;
}
.c-fold {
  width: 14px;
}
.c-prop {
  width: 76px;
}
.c-size {
  width: 44px;
}
.hint {
  flex: none;
  height: 60px;
  margin-top: 3px;
  padding: 2px 5px;
  border: 1px solid #9a9a9a;
  background: #f0f0f0;
}

/* Dokumentbereich */
.docs {
  display: flex;
  flex: 1;
  flex-direction: column;
  min-height: 0;
  border: 1px solid #6593cf;
  border-top: 0;
  background: #f0f0f0;
}
.doctabs {
  display: flex;
  flex: none;
  align-items: flex-end;
  height: 24px;
  border-bottom: 1px solid #6593cf;
  background: #e3efff;
}
.doctab {
  display: flex;
  gap: 6px;
  align-items: center;
  height: 20px;
  padding: 0 6px 0 7px;
  color: #3b68b5;
}
.doctab.active {
  padding: 0 7px 0 3px;
  border: 1px solid #6593cf;
  border-bottom: 0;
  border-radius: 3px 3px 0 0;
  background: #fcc067;
  color: #000;
  font-weight: bold;
}
.docnav {
  display: flex;
  gap: 4px;
  align-items: center;
  height: 20px;
  margin: 0 4px 0 auto;
}
.viewbar {
  display: flex;
  flex: none;
  align-items: center;
  height: 27px;
  padding-left: 2px;
  border-bottom: 1px solid #777;
  background: #f6f6f6;
}
.more {
  align-self: flex-end;
  width: 11px;
  height: 18px;
  margin: 0 6px 1px 12px;
  background: linear-gradient(#000, #000) center 10px / 5px 1px no-repeat, linear-gradient(#f2f2f2, #c9c9c9);
}
.more::after {
  content: "";
  display: block;
  width: 0;
  margin: 11px auto 0;
  border: 3px solid transparent;
  border-top: 3px solid #000;
  border-bottom: 0;
}
.zoom {
  appearance: none;
  flex: 1;
  min-width: 0;
  height: 16px;
  margin: 0 6px 0 0;
  background: linear-gradient(#8a8a8a, #8a8a8a) center / 100% 2px no-repeat;
}
.zoom::-webkit-slider-thumb {
  appearance: none;
  width: 6px;
  height: 10px;
  border: 1px solid #77756a;
  background: #ece9d8;
}
.view {
  display: flex;
  flex: 1;
  min-height: 0;
}
.canvas {
  flex: 1;
  min-width: 0;
  padding-top: 1px;
  border-left: 2px solid #777;
  background: #fff;
}
.plot {
  display: block;
}
.side {
  display: flex;
  flex: none;
  flex-direction: column;
  align-items: center;
  width: 19px;
}
.upright {
  flex: none;
  width: 16px;
  height: 66px;
  margin: 2px 0 5px;
  background: linear-gradient(#8a8a8a, #8a8a8a) center / 2px 100% no-repeat;
  writing-mode: vertical-lr;
}
.upright::-webkit-slider-thumb {
  width: 10px;
  height: 6px;
}
.view-vbar {
  flex: 1;
}
.view-vbar em {
  height: 103px;
  margin-top: 102px;
}
.view-hbar {
  height: 19px;
}
.view-hbar em {
  width: 252px;
  margin-left: 226px;
}

/* Schnittgrößen */
.neg path {
  fill: #ff000044;
  stroke: #ff2020;
}
.pos path {
  fill: #0000ff44;
  stroke: #2020ff;
}
.t-title {
  font: bold 13px "DejaVu Sans", sans-serif;
}
.t-val {
  font: bold 11px "DejaVu Sans", sans-serif;
}
.t-small {
  font: 8px "DejaVu Sans", sans-serif;
}
.t-axis {
  font: 10px "DejaVu Sans", sans-serif;
}
.t-dim {
  font: 11px "DejaVu Sans", sans-serif;
}
.dim path {
  fill: none;
  stroke: #a52a2a;
}

/* Tabellenbereich */
.tables {
  flex: none;
  margin-top: 4px;
  border: 1px solid #6593cf;
}
.kinds {
  display: flex;
  height: 28px;
  padding: 3px 2px;
  overflow: hidden;
  background: #e3efff;
  color: #3b68b5;
}
.kinds button {
  display: flex;
  flex: none;
  gap: 4px;
  align-items: center;
  width: 50px;
  height: 22px;
  padding-left: 2px;
  border-left: 1px solid #5a7fb8;
  overflow: hidden;
}
.kinds .active {
  width: 75px;
  border-left: 0;
  background: #fcc067;
  color: #000;
  font-weight: bold;
}
.sheet {
  height: 64px;
  overflow: hidden;
  border-top: 1px solid #777;
  border-left: 1px solid #777;
  background: #fff;
}
.sheet th {
  padding: 0 3px;
  border-right: 1px solid #a0a0a0;
  background: #f0f0f0;
  font-weight: normal;
  line-height: 19px;
  text-align: left;
  vertical-align: top;
}
.sheet thead tr:last-child th,
.sheet th[rowspan] {
  border-bottom: 1px solid #a0a0a0;
}
.sheet .group {
  border-bottom: 1px solid #a0a0a0;
  text-align: center;
}
.sheet .wide {
  padding-left: 62px;
  text-align: left;
}
.sheet td {
  height: 18px;
  border-right: 1px solid #e0e0e0;
}
.sheet td:first-child {
  background: #f0f0f0;
}
.c-no {
  width: 35px;
}
.c-name {
  width: 77px;
}
.c-x {
  width: 46px;
}
.c-lag {
  width: 121px;
}
.c-kom {
  width: 71px;
}
.bottomtabs {
  display: flex;
  flex: none;
  height: 24px;
  padding: 0 4px 2px;
  color: #2a5cb0;
}
.bottomtabs button {
  display: flex;
  gap: 5px;
  align-items: center;
  height: 22px;
  padding: 0 6px 0 3px;
}
.bottomtabs .active {
  border: 1px solid #6593cf;
  border-top: 0;
  border-radius: 0 0 3px 3px;
  background: #fff;
  color: #000;
}
.status {
  flex: none;
  height: 21px;
  border-top: 1px solid #8c8c8c;
}

/* Querschnittsfenster */
.dialog {
  position: absolute;
  right: 13px;
  bottom: 11px;
  width: 327px;
  height: 274px;
  padding: 0 5px 5px 6px;
  border: 1px solid #30353c;
  border-radius: 4px;
  background: linear-gradient(#eef5fd, #dce9f7 30px, #cfe0f2);
  box-shadow: 0 0 5px 1px #0008;
}
.dialog header {
  display: flex;
  align-items: center;
  justify-content: space-between;
  height: 24px;
  padding: 0 2px 0 1px;
  color: #333;
}
.dialog header button {
  display: flex;
  align-items: center;
  justify-content: center;
  width: 16px;
  height: 16px;
  border: 1px solid #7d8896;
  border-radius: 2px;
}
.dialog-body {
  display: flex;
  gap: 4px;
  height: 243px;
  padding: 2px 4px 2px 2px;
  border: 1px solid #000;
  background: #bfdbff;
}
.profile {
  flex: none;
  align-self: stretch;
  height: auto;
  background: #fff;
}
.values {
  display: flex;
  flex: 1;
  flex-direction: column;
  gap: 3px;
  min-width: 0;
}
.values-list {
  display: flex;
  flex: 1;
  min-height: 0;
  overflow: hidden;
  border: 1px solid #9a9a9a;
  background: #fff;
  color: #808080;
}
.values-list .propgrid {
  flex: 1;
  width: 0;
  height: 171px;
}
.values-list .propgrid td {
  padding-left: 2px;
  font-weight: normal;
}
.values-list .cat {
  color: #000;
}
.val-vbar em {
  height: 33px;
  margin-top: 4px;
}
.values-hint {
  flex: none;
  height: 60px;
  padding: 1px 5px;
  border: 1px solid #9a9a9a;
  background: #f0f0f0;
  line-height: 16px;
}
.values-hint sup {
  font-size: 8px;
  line-height: 0;
}
```
